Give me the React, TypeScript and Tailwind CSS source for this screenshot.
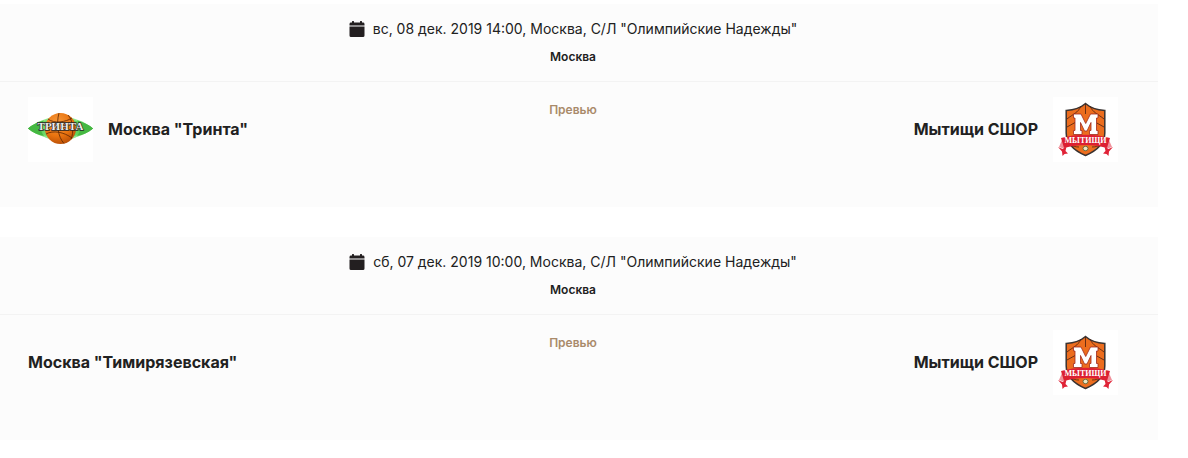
import type { ComponentType } from "react";

type Team = {
  name: string;
  Logo?: ComponentType;
};

type Match = {
  id: number;
  date: string;
  city: string;
  home: Team;
  away: Team;
};

function CalendarIcon() {
  return (
    <svg className="h-4 w-4 shrink-0" viewBox="0 0 16 16" fill="#231f20" aria-hidden="true">
      <path d="M2 1.6h1V.6a.6.6 0 0 1 .6-.6h.8a.6.6 0 0 1 .6.6v1h6V.6a.6.6 0 0 1 .6-.6h.8a.6.6 0 0 1 .6.6v1h1A1.5 1.5 0 0 1 15.5 3v1.6H.5V3A1.5 1.5 0 0 1 2 1.6z" />
      <path d="M.5 5.4h15v9.1A1.5 1.5 0 0 1 14 16H2a1.5 1.5 0 0 1-1.5-1.5z" />
    </svg>
  );
}

function TrintaLogo() {
  return (
    <svg className="h-[65px] w-[65px] shrink-0 bg-white" viewBox="0 0 65 65" role="img" aria-label="Тринта">
      <defs>
        <radialGradient id="trinta-ball" cx="0.4" cy="0.3" r="0.75">
          <stop offset="0" stopColor="#f79a3c" />
          <stop offset="0.6" stopColor="#e9730f" />
          <stop offset="1" stopColor="#b54c06" />
        </radialGradient>
        <linearGradient id="trinta-eye" x1="0" x2="1" y1="0" y2="0">
          <stop offset="0" stopColor="#2f9e2f" />
          <stop offset="0.25" stopColor="#6ed868" />
          <stop offset="0.75" stopColor="#62d45c" />
          <stop offset="1" stopColor="#2f9e2f" />
        </linearGradient>
      </defs>
      <ellipse cx="32.5" cy="31.5" rx="23" ry="12" fill="#a9eea2" />
      <path d="M0 31.5C9 24 20 20 32.5 20S56 24 65 31.5C56 39 45 42 32.5 42S9 39 0 31.5z" fill="#8fe588" />
      <path d="M0 31.5C8 25.5 20 22 32.5 22S57 25.5 65 31.5C57 37.5 45 40 32.5 40S8 37.5 0 31.5z" fill="url(#trinta-eye)" />
      <path d="M0 31.5C5 27 10 25 16 23.5C12 28 12 35 16 39C10 38 5 36 0 31.5zM65 31.5C60 27 55 25 49 23.5C53 28 53 35 49 39C55 38 60 36 65 31.5z" fill="#45b842" />
      <circle cx="32.5" cy="31.5" r="15.5" fill="url(#trinta-ball)" />
      <g fill="none" stroke="#5a2503" strokeWidth="0.8">
        <path d="M31 16C28 27 30 40 36 46.5" />
        <path d="M20 22C26 27 38 25 44 21" />
        <path d="M40 18C45 23 46 36 43 42" />
        <path d="M18 37C25 33 36 35 44 41" />
      </g>
      <g
        className="font-['Liberation_Serif',serif] text-[11px] font-bold"
        fill="#ededed"
        stroke="#262626"
        strokeWidth="1.3"
        paintOrder="stroke"
        textAnchor="middle"
      >
        <text x="32.5" y="33">ТРИНТА</text>
      </g>
    </svg>
  );
}

function MytishchiLogo() {
  return (
    <svg className="h-[65px] w-[65px] shrink-0 bg-white" viewBox="0 0 65 65" role="img" aria-label="Мытищи">
      <path
        d="M32.5 6.5C37 10.5 44 13 51.8 13.5V36C51.8 47 43 54 32.5 58.5C22 54 13.2 47 13.2 36V13.5C21 13 28 10.5 32.5 6.5z"
        fill="#ec6d1e"
        stroke="#3a3331"
        strokeWidth="1.5"
      />
      <g fill="none" stroke="#4a1f10" strokeWidth="0.8">
        <path d="M32.5 7V17M14 30L23 25M51 30L42 25M14 22C20 17 25 16 28 9M51 22C45 17 40 16 37 9M26 50C22 50 20 49 18 48M39 50C43 50 45 49 47 48" />
      </g>
      <path
        d="M20.500 17H28L32.700 26.500L37.500 17H45V21H43.500V33.500H45V37.500H36.500V33.500H38V25.500L34 34H31.500L27.500 25.500V33.500H29V37.500H20.500V33.500H22V21H20.500z"
        fill="#fff"
        stroke="#a02a1e"
        strokeWidth="0.8"
      />
      <path d="M9 43L6 50L10.5 51.5L13 46zM56 43L59 50L54.5 51.5L52 46z" fill="#f0909a" />
      <path d="M5 50L9.500 52L13.500 49.500L12.500 54L15 56.500L11.500 57L9.500 59L9 54.500zM60 50L55.500 52L51.500 49.500L52.500 54L50 56.500L53.500 57L55.500 59L56 54.500z" fill="#e02337" />
      <path d="M8 41C22 36.500 43 36.500 57 41L54 51C40 47 25 47 11 51z" fill="#dc2032" />
      <g className="font-['Liberation_Serif',serif] text-[8px] font-bold" fill="#fff" textAnchor="middle">
        <text x="32.5" y="46">МЫТИЩИ</text>
      </g>
      <ellipse cx="32.5" cy="51.5" rx="2.5" ry="2.2" fill="#efe7c4" stroke="#46603a" strokeWidth="0.8" />
    </svg>
  );
}

const matches: Match[] = [
  {
    id: 1,
    date: 'вс, 08 дек. 2019 14:00, Москва, С/Л "Олимпийские Надежды"',
    city: "Москва",
    home: { name: 'Москва "Тринта"', Logo: TrintaLogo },
    away: { name: "Мытищи СШОР", Logo: MytishchiLogo },
  },
  {
    id: 2,
    date: 'сб, 07 дек. 2019 10:00, Москва, С/Л "Олимпийские Надежды"',
    city: "Москва",
    home: { name: 'Москва "Тимирязевская"' },
    away: { name: "Мытищи СШОР", Logo: MytishchiLogo },
  },
];

function MatchCard({ match }: { match: Match }) {
  const { home, away } = match;

  return (
    <article className="bg-[#fcfcfc]">
      <header className="flex flex-col items-center border-b border-[#f3f3f3] pt-[15px] pr-10 pb-4 pl-7">
        <div className="flex items-center gap-2">
          <CalendarIcon />
          <p className="text-sm">{match.date}</p>
        </div>
        <p className="mt-[10px] text-xs font-semibold">{match.city}</p>
      </header>
      <div className="grid grid-cols-[1fr_auto_1fr] pt-[15px] pr-10 pb-[45px] pl-7">
        <div className="flex h-[65px] items-center gap-[15px]">
          {home.Logo && <home.Logo />}
          <h2 className="pb-[2px] text-base font-bold">{home.name}</h2>
        </div>
        <a href="#preview" className="mt-[5px] self-start text-xs font-semibold text-[#a98a6a]">
          Превью
        </a>
        <div className="flex h-[65px] items-center justify-end gap-[15px]">
          <h2 className="pb-[2px] text-base font-bold">{away.name}</h2>
          {away.Logo && <away.Logo />}
        </div>
      </div>
    </article>
  );
}

export default function App() {
  return (
    <main className="flex flex-col gap-[30px] bg-white pt-1 pr-[30px] pb-4 font-['Inter',sans-serif] text-[#212121]">
      {matches.map((match) => (
        <MatchCard key={match.id} match={match} />
      ))}
    </main>
  );
}
